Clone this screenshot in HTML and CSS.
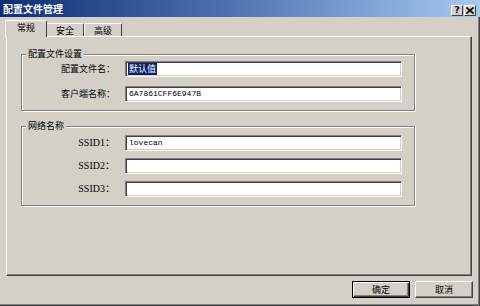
FILE: index.html
```
<!DOCTYPE html>
<html lang="zh-CN">

<head>
    <meta charset="UTF-8">
    <meta name="viewport" content="width=device-width, initial-scale=1.0">
    <link rel="stylesheet" href="styles.css">
</head>

<body>

    <div class="window">
        <div class="titlebar">
            <span class="title">配置文件管理</span>
            <div class="title-buttons">
                <span class="tbtn help">?</span>
                <span class="tbtn close">
                    <svg width="8" height="7" viewBox="0 0 8 7">
                        <path d="M0.5 0.5 L7.5 6.5 M7.5 0.5 L0.5 6.5" stroke="#000" stroke-width="1.6" />
                    </svg>
                </span>
            </div>
        </div>

        <div class="content">
            <div class="tabs">
                <span class="tab active">常规</span>
                <span class="tab">安全</span>
                <span class="tab">高级</span>
            </div>

            <div class="panel">
                <!-- 配置文件设置 -->
                <fieldset class="group group-profile">
                    <legend>配置文件设置</legend>
                    <div class="rows">
                        <label class="label">配置文件名：</label>
                        <div class="field"><span class="selected">默认值</span></div>
                        <label class="label">客户端名称：</label>
                        <div class="field">6A7861CFF6E947B</div>
                    </div>
                </fieldset>

                <!-- 网络名称 -->
                <fieldset class="group group-network">
                    <legend>网络名称</legend>
                    <div class="rows">
                        <label class="label latin">SSID1：</label>
                        <div class="field">lovecan</div>
                        <label class="label latin">SSID2：</label>
                        <div class="field"></div>
                        <label class="label latin">SSID3：</label>
                        <div class="field"></div>
                    </div>
                </fieldset>
            </div>

            <div class="footer">
                <button class="btn default" type="button">确定</button>
                <button class="btn" type="button">取消</button>
            </div>
        </div>
    </div>

</body>

</html>
```

FILE: styles.css
```
body {
    margin: 0;
    background-color: #d4d0c8;
    font-family: "Noto Sans CJK SC", "DejaVu Sans", sans-serif;
    font-size: 9px;
    color: #000;
}

.window {
    width: 480px;
    height: 306px;
    display: flex;
    flex-direction: column;
    overflow: hidden;
    background-color: #d4d0c8;
}

.titlebar {
    height: 17px;
    flex-shrink: 0;
    display: flex;
    align-items: center;
    justify-content: space-between;
    padding: 0 4px 0 3px;
    background: linear-gradient(to right, #0f2d74, #4a6eae 45%, #a6caf0);
}

.title {
    color: #fff;
    font-weight: bold;
    font-size: 10px;
    line-height: 12px;
}

.title-buttons {
    display: flex;
    gap: 1px;
    margin-top: 3px;
}

.tbtn {
    width: 12px;
    height: 11px;
    box-sizing: border-box;
    display: flex;
    align-items: center;
    justify-content: center;
    background-color: #d4d0c8;
    border-top: 1px solid #fff;
    border-left: 1px solid #fff;
    border-right: 1px solid #404040;
    border-bottom: 1px solid #404040;
    font-family: "DejaVu Sans", sans-serif;
    font-weight: bold;
    font-size: 9px;
    line-height: 9px;
}

.content {
    flex: 1;
    display: flex;
    flex-direction: column;
    padding: 4px 8px 0 6px;
    border-left: 2px solid #a3b1bc;
    margin-left: -2px;
    box-shadow: inset -1px 0 #404040, inset -2px 0 #808080, inset 0 -1px #404040, inset 0 -2px #808080;
}

.tabs {
    display: flex;
    align-items: flex-end;
    height: 16px;
    margin-bottom: -1px;
}

.tab {
    height: 13px;
    padding: 0 9px;
    line-height: 13px;
    border-top: 1px solid #fff;
    border-left: 1px solid #fff;
    border-right: 1px solid #404040;
    border-radius: 2px 2px 0 0;
    background-color: #d4d0c8;
}

.tab.active {
    height: 16px;
    line-height: 14px;
    padding: 0 11px;
    margin: 0 -1px 0 -1px;
    position: relative;
    z-index: 1;
}

.panel {
    height: 240px;
    box-sizing: border-box;
    border-top: 1px solid #fff;
    border-left: 1px solid #fff;
    border-right: 1px solid #404040;
    border-bottom: 1px solid #404040;
    box-shadow: inset -1px -1px 0 #808080;
    padding: 11px 0 0 14px;
}

.group {
    width: 394px;
    box-sizing: border-box;
    margin: 0;
    padding: 1px 0 8px 0;
    border: 1px solid #808080;
    box-shadow: inset 1px 1px 0 #fff, 1px 1px 0 #fff;
    min-inline-size: 0;
}

.group legend {
    padding: 0 2px;
    margin-left: 4px;
    line-height: 12px;
    background-color: #d4d0c8;
}

.group-network {
    margin-top: 9px;
    padding-top: 3px;
}

.rows {
    display: grid;
    grid-template-columns: 93px 277px;
    column-gap: 10px;
    row-gap: 9px;
    align-items: center;
}

.group-network .rows {
    row-gap: 7px;
}

.label {
    text-align: right;
    line-height: 12px;
}

.label.latin {
    font-family: "Liberation Serif", "Noto Sans CJK SC", serif;
    font-size: 10px;
}

.field {
    height: 16px;
    box-sizing: border-box;
    background-color: #fff;
    border-top: 1px solid #808080;
    border-left: 1px solid #808080;
    border-right: 1px solid #fff;
    border-bottom: 1px solid #fff;
    box-shadow: inset 1px 1px 0 #404040, inset -1px -1px 0 #d4d0c8;
    padding: 0 3px;
    font-family: "Liberation Mono", monospace;
    font-size: 8px;
    line-height: 14px;
    white-space: nowrap;
}

.selected {
    display: inline-block;
    margin-left: -1px;
    padding: 0 1px;
    line-height: 12px;
    background-color: #0a246a;
    color: #fff;
    font-family: "Noto Sans CJK SC", sans-serif;
    font-size: 9px;
    vertical-align: middle;
}

.footer {
    display: flex;
    justify-content: flex-end;
    gap: 5px;
    padding: 5px 0 0 0;
    margin-right: -1px;
}

.btn {
    width: 58px;
    height: 17px;
    padding: 0;
    font-family: "Noto Sans CJK SC", sans-serif;
    font-size: 9px;
    color: #000;
    background-color: #d4d0c8;
    border-top: 1px solid #fff;
    border-left: 1px solid #fff;
    border-right: 1px solid #404040;
    border-bottom: 1px solid #404040;
    box-shadow: inset -1px -1px 0 #808080;
}

.btn.default {
    border: 1px solid #000;
    box-shadow: inset 1px 1px 0 #fff, inset -1px -1px 0 #404040, inset -2px -2px 0 #808080;
}
```
